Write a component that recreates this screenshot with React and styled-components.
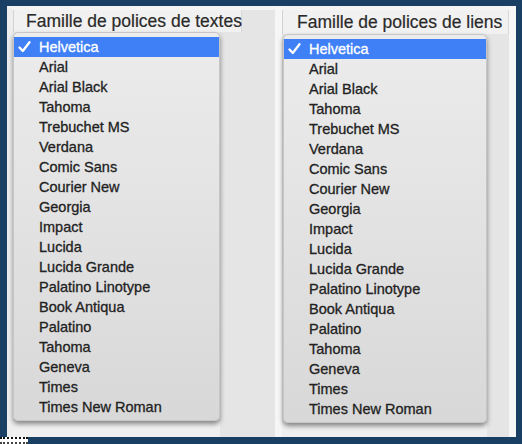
import React from "react";
import styled, { createGlobalStyle } from "styled-components";

const fontList = [
  "Helvetica", "Arial", "Arial Black", "Tahoma", "Trebuchet MS", "Verdana",
  "Comic Sans", "Courier New", "Georgia", "Impact", "Lucida", "Lucida Grande",
  "Palatino Linotype", "Book Antiqua", "Palatino", "Tahoma", "Geneva", "Times",
  "Times New Roman",
];

const GlobalStyle = createGlobalStyle`
  body {
    margin: 0;
    background: #194064;
    font-family: "Liberation Sans", Arial, sans-serif;
  }
`;

const Frame = styled.div`
  width: 522px;
  height: 444px;
  box-sizing: border-box;
  background: #194064;
  padding: 6px 6px 0 7px;
  display: flex;
  flex-direction: column;
`;

const Panels = styled.div`
  display: flex;
  gap: 7px;
  height: 431px;
  background: #f6f6f6;
`;

const Panel = styled.div`
  width: ${p => p.$w}px;
  box-sizing: border-box;
  background: #e5e5e5;
  border-top: 4px solid #f4f4f4;
  border-left: ${p => p.$gutter}px solid #eeeeee;
  display: flex;
  flex-direction: column;
`;

const Header = styled.div`
  width: ${p => p.$w}px;
  height: ${p => p.$h}px;
  box-sizing: border-box;
  background: #f1f1f1;
  border-left: 1px solid #d2d2d2;
  border-right: 1px solid #d8d8d8;
  padding-left: ${p => p.$pad}px;
  font-size: 17.5px;
  line-height: ${p => p.$h}px;
  color: #2a2a2a;
  -webkit-text-stroke: 0.2px #2a2a2a;
  white-space: nowrap;
`;

const Menu = styled.div`
  position: relative;
  z-index: 1;
  margin-left: ${p => p.$x}px;
  width: ${p => p.$w}px;
  box-sizing: border-box;
  border: 1px solid #c6c6c6;
  border-radius: 5px;
  background: linear-gradient(#ececec, #e2e2e2 50%, #d8d8d8);
  box-shadow: 0 3px 5px rgba(0, 0, 0, 0.45);
  padding: 4px 0 3px;
`;

const Row = styled.div`
  height: 20px;
  display: flex;
  align-items: center;
  padding-left: 4px;
  font-size: 14.5px;
  color: ${p => (p.$selected ? "#ffffff" : "#222222")};
  background: ${p => (p.$selected ? "#3f80f7" : "transparent")};
  -webkit-text-stroke: 0.3px ${p => (p.$selected ? "#ffffff" : "#222222")};
  white-space: nowrap;
`;

const CheckSlot = styled.span`
  width: 21px;
  display: flex;
  align-items: center;
`;

const Bottom = styled.div`
  flex: 1;
  width: ${p => p.$w}px;
  background: #f0f0f0;
`;

const BottomStrip = styled.div`
  height: 7px;
  margin-left: -7px;
  display: flex;
`;

const Scrap = styled.div`
  width: 28px;
  height: 7px;
  box-sizing: border-box;
  background: #ffffff;
  border-top: 2px dotted #111;
  border-bottom: 2px dotted #444;
`;

function Check() {
  return (
    <svg width="13" height="12" viewBox="0 0 13 12">
      <path d="M1.5 6.5 L4.8 10 L11.5 1.2" fill="none" stroke="#fff" strokeWidth="2.3" strokeLinecap="round" strokeLinejoin="round" />
    </svg>
  );
}

function FontPanel({ title, width, gutter, headerW, headerH, headerPad, menuX, menuW, bottomW }) {
  return (
    <Panel $w={width} $gutter={gutter}>
      <Header $w={headerW} $h={headerH} $pad={headerPad}>{title}</Header>
      <Menu $x={menuX} $w={menuW}>
        {fontList.map((name, i) => (
          <Row key={i} $selected={i === 0}>
            <CheckSlot>{i === 0 && <Check />}</CheckSlot>
            {name}
          </Row>
        ))}
      </Menu>
      <Bottom $w={bottomW} />
    </Panel>
  );
}

export default function App() {
  return (
    <>
      <GlobalStyle />
      <Frame>
        <Panels>
          <FontPanel
            title="Famille de polices de textes"
            width={268}
            gutter={6}
            headerW={229}
            headerH={22}
            headerPad={12}
            menuX={0}
            menuW={207}
            bottomW={207}
          />
          <FontPanel
            title="Famille de polices de liens"
            width={227}
            gutter={0}
            headerW={227}
            headerH={24}
            headerPad={14}
            menuX={1}
            menuW={204}
            bottomW={205}
          />
        </Panels>
        <BottomStrip>
          <Scrap />
        </BottomStrip>
      </Frame>
    </>
  );
}
